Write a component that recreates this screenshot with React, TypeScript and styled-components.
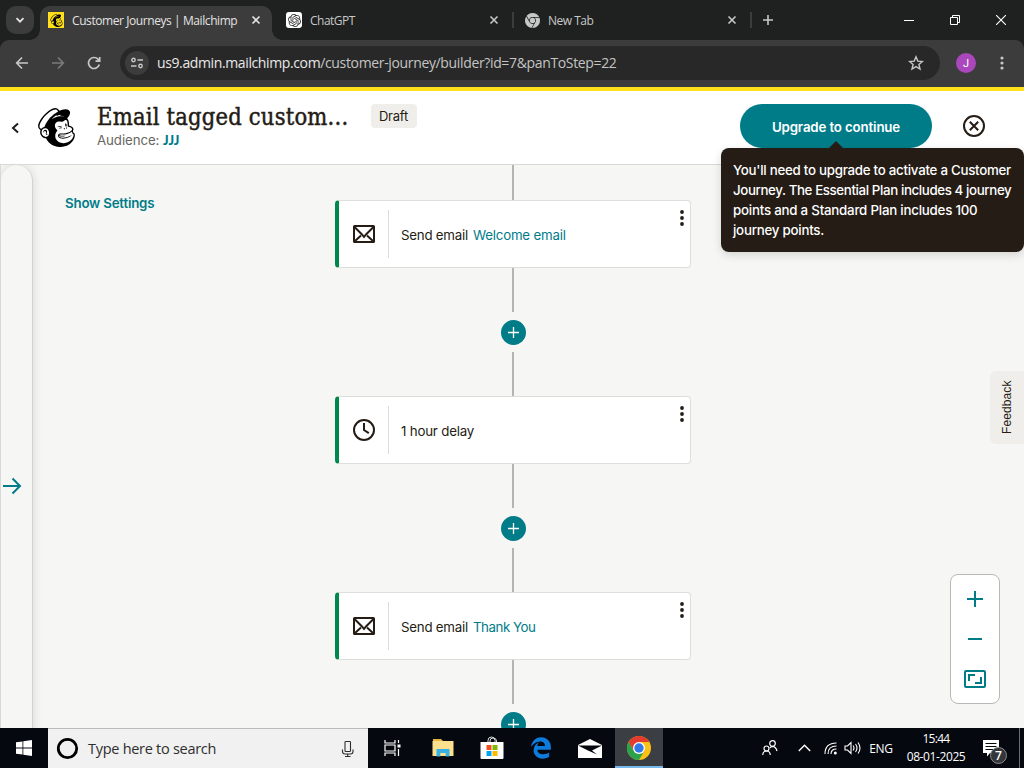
import React from "react";
import styled, { createGlobalStyle } from "styled-components";
import { SiMailchimp, SiOpenai, SiGooglechrome } from "react-icons/si";
import { FaEdgeLegacy } from "react-icons/fa6";

const TEAL = "#007c89";
const INK = "#241c15";
const SEGOE = '"Open Sans", "Noto Sans", sans-serif';
const GRAPHIK = 'Inter, "Liberation Sans", sans-serif';

const GlobalStyle = createGlobalStyle`
  * { box-sizing: border-box; }
  body { margin: 0; overflow: hidden; font-family: ${GRAPHIK}; color: ${INK}; }
  svg { display: block; flex: none; }
  button { border: 0; padding: 0; margin: 0; background: none; font: inherit; color: inherit; }
`;

const Screen = styled.div`
  width: 1024px;
  height: 768px;
  display: flex;
  flex-direction: column;
  overflow: hidden;
  background: #f6f6f4;
`;

/* Plain run of text; $ls tunes the tracking. */
const Label = styled.span<{ $size: number; $ls?: number; $weight?: number; $color?: string }>`
  font-size: ${(p) => p.$size}px;
  letter-spacing: ${(p) => p.$ls ?? 0}px;
  font-weight: ${(p) => p.$weight ?? 400};
  color: ${(p) => p.$color ?? "inherit"};
  white-space: pre;
`;

/* ---------- Browser chrome ---------- */
const TabStrip = styled.div`
  height: 40px;
  flex: none;
  display: flex;
  background: #1f2120;
  font-family: ${SEGOE};
  color: #c7c7c7;
`;

const TabSearch = styled.button`
  width: 28px;
  height: 28px;
  margin: 6px 6px 0;
  border-radius: 10px;
  background: #3c3c3c;
  display: grid;
  place-items: center;
`;

const Tab = styled.div<{ $active?: boolean; $width: number; $pad: number; $end?: number }>`
  position: relative;
  width: ${(p) => p.$width}px;
  height: 34px;
  margin-top: 6px;
  padding: 0 ${(p) => p.$end ?? 11}px 6px ${(p) => p.$pad}px;
  display: flex;
  align-items: center;
  gap: 8px;
  border-radius: 10px 10px 0 0;
  background: ${(p) => (p.$active ? "#3c3c3c" : "transparent")};
  color: ${(p) => (p.$active ? "#e3e3e3" : "#c7c7c7")};
  &::before,
  &::after {
    content: "";
    display: ${(p) => (p.$active ? "block" : "none")};
    position: absolute;
    bottom: 0;
    width: 10px;
    height: 10px;
  }
  &::before { left: -10px; background: radial-gradient(circle at 0 0, transparent 9.5px, #3c3c3c 10px); }
  &::after { right: -10px; background: radial-gradient(circle at 100% 0, transparent 9.5px, #3c3c3c 10px); }
  & > :last-child { margin-left: auto; }
`;

const Favicon = styled.div<{ $bg: string; $color: string }>`
  flex: none;
  width: 16px;
  height: 16px;
  border-radius: ${(p) => (p.$bg === "#fff" ? 3 : 0)}px;
  background: ${(p) => p.$bg};
  color: ${(p) => p.$color};
  display: grid;
  place-items: center;
`;

const TabDivider = styled.i`
  width: 2px;
  height: 16px;
  margin-top: 12px;
  background: #3c3c3c;
`;

const WindowControls = styled.div`
  margin-left: auto;
  display: flex;
  color: #fff;
  & > span { width: 46px; display: grid; place-items: center; }
`;

const NewTabButton = styled.button`
  width: 32px;
  display: grid;
  place-items: center;
`;

const ToolbarBack = styled.div`
  background: #1f2120;
  flex: none;
`;

const Toolbar = styled.div`
  height: 47px;
  padding: 0 15px 1px 15px;
  display: flex;
  align-items: center;
  border-radius: 9px 9px 0 0;
  background: #3c3c3c;
  color: #c7c7c7;
  font-family: ${SEGOE};
`;

const NavButtons = styled.div`
  width: 105px;
  display: flex;
  gap: 22px;
`;

const Omnibox = styled.div`
  width: 820px;
  height: 34px;
  padding: 0 16px 0 5px;
  border-radius: 17px;
  background: #282828;
  display: flex;
  align-items: center;
  gap: 8px;
  & > :last-child { margin-left: auto; }
`;

const Url = styled.div`
  padding-bottom: 2px;
`;

const SiteChip = styled.span`
  width: 24px;
  height: 24px;
  border-radius: 50%;
  background: #3c3c3c;
  display: grid;
  place-items: center;
`;

const Avatar = styled.span`
  width: 20px;
  height: 20px;
  margin: 0 23px 0 16px;
  border-radius: 50%;
  background: #ab47bc;
  color: #fff;
  font: 11px Roboto, sans-serif;
  display: grid;
  place-items: center;
`;

/* ---------- Page header ---------- */
const Header = styled.header`
  position: relative;
  z-index: 2;
  height: 78px;
  flex: none;
  display: flex;
  align-items: flex-start;
  border-top: 4px solid #ffe01b;
  border-bottom: 1px solid #d9d9d8;
  background: #fff;
`;

const HeaderBack = styled.div`
  width: 37px;
  padding: 31px 0 0 10px;
`;

const Brand = styled.div`
  width: 60px;
  padding-top: 17px;
  color: #000;
`;

const TitleBlock = styled.div`
  width: 274px;
  display: flex;
  flex-direction: column;
`;

const Title = styled.h1`
  margin: 11px 0 0;
  height: 29px;
  font: 400 23.5px/31px "DejaVu Serif Condensed", "DejaVu Serif", serif;
  letter-spacing: 0.2px;
  white-space: nowrap;
  -webkit-text-stroke: 0.45px ${INK};
`;

const Audience = styled.div`
  height: 16px;
  line-height: 16px;
  color: #6b6762;
`;

const AudienceLink = styled.a`
  font: 900 13px/16px Lato, sans-serif;
  color: ${TEAL};
`;

const Badge = styled.span`
  width: 46px;
  height: 24px;
  margin-top: 13px;
  padding-right: 1px;
  border-radius: 4px;
  background: #efeeea;
  display: grid;
  place-items: center;
`;

const Actions = styled.div`
  margin-left: auto;
  padding: 13px 39px 0 0;
  display: flex;
  align-items: center;
  gap: 31px;
`;

const UpgradeWrap = styled.div`
  position: relative;
`;

const UpgradeButton = styled.button`
  width: 192px;
  height: 44px;
  padding-bottom: 1px;
  border-radius: 22px;
  background: ${TEAL};
  color: #fff;
`;

const Tooltip = styled.div`
  position: absolute;
  top: 44px;
  left: -19px;
  width: 303px;
  height: 104px;
  padding: 12px;
  border-radius: 8px;
  background: ${INK};
  color: #fff;
  font-size: 13.3px;
  line-height: 20px;
  box-shadow: 0 3px 10px rgba(0, 0, 0, 0.14);
  display: flex;
  flex-direction: column;
  &::before {
    content: "";
    position: absolute;
    top: -7px;
    left: 108px;
    border: 7px solid transparent;
    border-top: 0;
    border-bottom-color: ${INK};
  }
`;

/* ---------- Journey canvas ---------- */
const Canvas = styled.main`
  height: 563px;
  flex: none;
  display: grid;
  grid-template-columns: 334px 356px 1fr;
  border-left: 1px solid #d9d9d8;
  overflow: hidden;
  background: #f6f6f4;
`;

const LeftSide = styled.div`
  display: flex;
`;

const Drawer = styled.aside`
  width: 32px;
  height: 580px;
  padding: 312px 0 0 2px;
  border-radius: 16px 16px 0 0;
  border-right: 1px solid #d3d3d1;
  background: #f6f6f4;
  box-shadow: 0 0 10px rgba(36, 28, 21, 0.14);
`;

const SettingsLink = styled.a`
  margin: 27px 0 0 32px;
  line-height: 20px;
  color: ${TEAL};
`;

const Flow = styled.div`
  display: flex;
  flex-direction: column;
  align-items: center;
`;

const Connector = styled.i<{ $height: number }>`
  flex: none;
  width: 2px;
  height: ${(p) => p.$height}px;
  background: #b4b4b2;
`;

const Card = styled.div`
  flex: none;
  width: 356px;
  height: 68px;
  display: flex;
  align-items: center;
  border: 1px solid #dddddb;
  border-left: 4px solid #00884a;
  border-radius: 4px;
  background: #fff;
`;

const CardIcon = styled.div`
  width: 50px;
  height: 48px;
  border-right: 1px solid #dddddb;
  display: grid;
  place-items: center;
`;

const CardText = styled.div`
  flex: 1;
  padding: 0 0 1px 12px;
`;

const StepLink = styled.a`
  margin-left: 5px;
  color: ${TEAL};
`;

const CardMenu = styled.div`
  align-self: flex-start;
  padding: 8px 5px 0 0;
`;

const AddStep = styled.button`
  flex: none;
  width: 25px;
  height: 25px;
  margin: 8px 0 7px;
  border-radius: 50%;
  background: ${TEAL};
  display: grid;
  place-items: center;
`;

const RightSide = styled.div`
  display: flex;
  flex-direction: column;
  align-items: flex-end;
`;

const Feedback = styled.button`
  width: 34px;
  height: 73px;
  margin-top: 206px;
  border-radius: 0 6px 6px 0;
  background: #efeeea;
  writing-mode: vertical-rl;
  transform: rotate(180deg);
  font-family: "Liberation Sans", sans-serif;
`;

const ZoomPanel = styled.div`
  width: 50px;
  height: 130px;
  margin: 130px 24px 0 0;
  padding: 15px 0;
  border: 1px solid #b9b8b5;
  border-radius: 8px;
  background: #fff;
  display: flex;
  flex-direction: column;
  align-items: center;
  gap: 30px;
`;

/* ---------- Windows taskbar ---------- */
const Taskbar = styled.footer`
  height: 40px;
  flex: none;
  display: flex;
  background: #05080f;
  color: #fff;
  font-family: ${SEGOE};
`;

const TaskCell = styled.div<{ $active?: boolean; $gap?: number }>`
  width: 48px;
  height: 40px;
  margin-right: ${(p) => p.$gap ?? 0}px;
  display: grid;
  place-items: center;
  background: ${(p) => (p.$active ? "#3b3e42" : "transparent")};
  box-shadow: ${(p) => (p.$active ? "inset 0 -2px #76b9ed" : "none")};
`;

const SearchBox = styled.div`
  width: 320px;
  padding: 0 13px 0 8px;
  display: flex;
  align-items: center;
  gap: 9px;
  border-top: 1px solid #bcbcbe;
  background: #f1f1f1;
  color: #2e2e2e;
  & > :last-child { margin-left: auto; }
`;

const Tray = styled.div`
  margin-left: auto;
  display: flex;
  align-items: center;
`;

const TrayItem = styled.div<{ $width: number }>`
  width: ${(p) => p.$width}px;
  display: flex;
  justify-content: center;
`;

const Clock = styled.div`
  width: 76px;
  display: flex;
  flex-direction: column;
  align-items: center;
  line-height: 18px;
`;

const Notifications = styled.div`
  position: relative;
  width: 45px;
  height: 40px;
  padding: 12px 0 0 9px;
`;

const Count = styled.span`
  position: absolute;
  left: 16px;
  top: 19px;
  width: 17px;
  height: 17px;
  border: 1px solid #8b8b8b;
  border-radius: 50%;
  background: #33363a;
  display: grid;
  place-items: center;
  line-height: 15px;
`;

const ShowDesktop = styled.i`
  width: 5px;
  height: 40px;
  border-left: 1px solid #6b6d70;
`;

/* ---------- Icons ---------- */
type IconProps = { w: number; h?: number; sw?: number; children: React.ReactNode };
const Icon = ({ w, h = w, sw = 1.5, children }: IconProps) => (
  <svg width={w} height={h} viewBox={`0 0 ${w} ${h}`} fill="none" stroke="currentColor" strokeWidth={sw}>
    {children}
  </svg>
);

const Cross = () => (
  <Icon w={10} sw={1.6}><path d="M1.5 1.5l7 7M8.5 1.5l-7 7" /></Icon>
);

const Arrow = ({ back }: { back?: boolean }) => (
  <Icon w={14} sw={1.7}>
    <path d={back ? "M13 7H2M7 1.5L1.7 7 7 12.5" : "M1 7h11M7 1.5L12.3 7 7 12.5"} opacity={back ? 1 : 0.45} />
  </Icon>
);

const Dots = ({ r, step, color }: { r: number; step: number; color: string }) => (
  <svg width={6} height={18} fill={color}>
    {[-1, 0, 1].map((i) => <circle key={i} cx={3} cy={9 + i * step} r={r} />)}
  </svg>
);

const MailIcon = () => (
  <svg width={24} height={24} fill="none" stroke={INK} strokeWidth={2}>
    <rect x="2" y="4" width="20" height="16" rx="0.5" />
    <path d="M2.5 5l7.500 7.500 2 2.500 2-2.500L21.500 5M2.5 19.500l6.500-6M21.500 19.500l-6.500-6" />
  </svg>
);

const ClockIcon = () => (
  <svg width={24} height={24} fill="none" stroke={INK} strokeWidth={2}>
    <circle cx="12" cy="12" r="10" />
    <path d="M12 5v7l4.800 3.200" />
  </svg>
);

type StepData = { kind: "mail" | "clock"; text: string; link?: string; ls: number; linkLs?: number };
const steps: StepData[] = [
  { kind: "mail", text: "Send email", link: "Welcome email", ls: -0.24, linkLs: -0.2 },
  { kind: "clock", text: "1 hour delay", ls: -0.2 },
  { kind: "mail", text: "Send email", link: "Thank You", ls: -0.24, linkLs: -0.45 },
];

const Step = ({ step }: { step: StepData }) => (
  <>
    <Card>
      <CardIcon>{step.kind === "mail" ? <MailIcon /> : <ClockIcon />}</CardIcon>
      <CardText>
        <Label $size={13.3} $ls={step.ls}>{step.text}</Label>
        {step.link && <StepLink><Label $size={13.3} $ls={step.linkLs}>{step.link}</Label></StepLink>}
      </CardText>
      <CardMenu><Dots r={1.9} step={6} color={INK} /></CardMenu>
    </Card>
    <Connector $height={44} />
    <AddStep><Icon w={13} sw={1.3}><g stroke="#fff"><path d="M6.500 1v11M1 6.500h11" /></g></Icon></AddStep>
  </>
);

export default function App() {
  return (
    <Screen>
      <GlobalStyle />
      <TabStrip>
        <TabSearch><Icon w={10} sw={1.8}><path d="M1.500 3.200L5 6.700l3.500-3.500" stroke="#e3e3e3" /></Icon></TabSearch>
        <Tab $active $width={232} $pad={8}>
          <Favicon $bg="#ffe01b" $color="#000"><SiMailchimp size={13} /></Favicon>
          <Label $size={12} $ls={-0.42}>Customer Journeys | Mailchimp</Label>
          <Cross />
        </Tab>
        <Tab $width={240} $pad={14} $end={13}>
          <Favicon $bg="#fff" $color="#333"><SiOpenai size={13} /></Favicon>
          <Label $size={12} $ls={-0.5}>ChatGPT</Label>
          <Cross />
        </Tab>
        <TabDivider />
        <Tab $width={236} $pad={11} $end={13}>
          <SiGooglechrome size={15} />
          <Label $size={12} $ls={-0.5}>New Tab</Label>
          <Cross />
        </Tab>
        <TabDivider />
        <NewTabButton><Icon w={12} sw={1.6}><path d="M6 1v10M1 6h10" /></Icon></NewTabButton>
        <WindowControls>
          <span><Icon w={10} sw={1}><path d="M0 5.500h10" /></Icon></span>
          <span><Icon w={10} sw={1}><path d="M.5 2.500h7v7h-7zM2.500 2.500v-2h7v7h-2" /></Icon></span>
          <span><Icon w={10} sw={1.1}><path d="M0 0l10 10M10 0L0 10" /></Icon></span>
        </WindowControls>
      </TabStrip>

      <ToolbarBack>
        <Toolbar>
          <NavButtons>
            <Arrow back />
            <Arrow />
            <Icon w={14} sw={1.7}><path d="M12.300 8.500A5.500 5.500 0 1 1 11 3.200l1.500 1.500M12.700 1v4.200H8.500" /></Icon>
          </NavButtons>
          <Omnibox>
            <SiteChip>
              <Icon w={12} sw={1.4}><circle cx="2.500" cy="3" r="1.700" /><path d="M6.500 3H12M0 9h5.500" /><circle cx="9.500" cy="9" r="1.700" /></Icon>
            </SiteChip>
            <Url>
              <Label $size={14} $ls={-0.38} $color="#e8e8e8">us9.admin.mailchimp.com</Label>
              <Label $size={14} $ls={-0.35} $color="#c4c4c4">/customer-journey/builder?id=7&amp;panToStep=22</Label>
            </Url>
            <Icon w={16} sw={1.4}><path d="M8 1.800l1.800 4.300 4.600.4-3.500 3 1.100 4.500-4-2.400-4 2.400 1.100-4.500-3.500-3 4.600-.4z" /></Icon>
          </Omnibox>
          <Avatar>J</Avatar>
          <Dots r={1.6} step={5} color="#c7c7c7" />
        </Toolbar>
      </ToolbarBack>

      <Header>
        <HeaderBack><Icon w={10} h={12} sw={2}><path d="M8 1.500L3 6l5 4.500" /></Icon></HeaderBack>
        <Brand><SiMailchimp size={39} /></Brand>
        <TitleBlock>
          <Title>Email tagged custom...</Title>
          <Audience>
            <Label $size={13.3} $ls={-0.1}>Audience: </Label>
            <AudienceLink>JJJ</AudienceLink>
          </Audience>
        </TitleBlock>
        <Badge><Label $size={13} $ls={-0.2}>Draft</Label></Badge>
        <Actions>
          <UpgradeWrap>
            <UpgradeButton><Label $size={13.3} $ls={-0.15} $weight={600}>Upgrade to continue</Label></UpgradeButton>
            <Tooltip role="tooltip">
              <Label $size={13.3} $ls={-0.26} $weight={500}>You'll need to upgrade to activate a Customer</Label>
              <Label $size={13.3} $ls={-0.38} $weight={500}>Journey. The Essential Plan includes 4 journey</Label>
              <Label $size={13.3} $ls={-0.22} $weight={500}>points and a Standard Plan includes 100</Label>
              <Label $size={13.3} $ls={-0.24} $weight={500}>journey points.</Label>
            </Tooltip>
          </UpgradeWrap>
          <Icon w={22} sw={2}><circle cx="11" cy="11" r="10" /><path d="M6.800 6.800l8.400 8.400M15.200 6.800l-8.400 8.400" /></Icon>
        </Actions>
      </Header>

      <Canvas>
        <LeftSide>
          <Drawer>
            <Icon w={19} h={18} sw={2}><g stroke={TEAL}><path d="M0 9h17M9.500 1.500L17 9l-7.500 7.500" /></g></Icon>
          </Drawer>
          <SettingsLink><Label $size={13.3} $ls={-0.2} $weight={600}>Show Settings</Label></SettingsLink>
        </LeftSide>
        <Flow>
          <Connector $height={35} />
          <Step step={steps[0]} />
          <Connector $height={44} />
          <Step step={steps[1]} />
          <Connector $height={44} />
          <Step step={steps[2]} />
        </Flow>
        <RightSide>
          <Feedback><Label $size={12} $ls={0.1}>Feedback</Label></Feedback>
          <ZoomPanel>
            <Icon w={18} sw={2}><g stroke={TEAL}><path d="M9 1v16M1 9h16" /></g></Icon>
            <Icon w={14} h={2} sw={2}><g stroke={TEAL}><path d="M0 1h14" /></g></Icon>
            <Icon w={22} h={18} sw={2}>
              <g stroke={TEAL}>
                <rect x="1" y="1" width="20" height="16" rx="1" />
                <path d="M5 11V5h6M17 7v6h-6" />
              </g>
            </Icon>
          </ZoomPanel>
        </RightSide>
      </Canvas>

      <Taskbar>
        <TaskCell>
          <svg width={16} height={16} fill="#fff"><path d="M0 2.300l6.500-.9v6.200H0zM7.300 1.300L16 0v7.600H7.300zM0 8.400h6.500v6.200L0 13.700zM7.300 8.400H16V16l-8.700-1.200z" /></svg>
        </TaskCell>
        <SearchBox>
          <Icon w={23} sw={2.8}><circle cx="11.500" cy="11.500" r="9.200" stroke="#000" /></Icon>
          <Label $size={14.5} $ls={-0.28}>Type here to search</Label>
          <Icon w={15} h={18} sw={1.1}><rect x="5" y="1.500" width="5.500" height="10" rx="0.800" /><path d="M2.500 9.500v2q0 2.500 2.500 2.500h5.500q2.500 0 2.500-2.500v-2M7.700 14v2.500M5 16.500h5.500" /></Icon>
        </SearchBox>
        <TaskCell $gap={3}>
          <Icon w={17} h={16} sw={1.2}>
            <path d="M1 0v3h10V0M1 5h10v6H1zM1 16v-3h10v3M14.500 0v3M14.500 9v7" />
            <rect x="13.500" y="4.500" width="3" height="3" fill="#fff" strokeWidth={0} />
          </Icon>
        </TaskCell>
        <TaskCell $gap={1}>
          <svg width={22} height={20}>
            <path d="M1 1h8l2 2h9.500v5H1z" fill="#e8b63c" />
            <path d="M.5 3h21v15H.500z" fill="#fde08d" />
            <path d="M4.500 18.500V11h13v7.500h-3.800V15H8.300v3.500z" fill="#38b0e4" />
          </svg>
        </TaskCell>
        <TaskCell $gap={1}>
          <svg width={24} height={24}>
            <path d="M8 7V4.500Q8 1 11.500 1T15 4.500V7M10 7V5q0-3 3-3 3.500 0 3.500 3v2" fill="none" stroke="#ddd" />
            <path d="M.5 6h23v16q0 1-1 1h-21q-1 0-1-1z" fill="#fff" />
            <path d="M6.500 9h5v5h-5z" fill="#f25022" />
            <path d="M12.500 9h5v5h-5z" fill="#7fba00" />
            <path d="M6.500 15h5v5h-5z" fill="#00a4ef" />
            <path d="M12.500 15h5v5h-5z" fill="#ffb900" />
          </svg>
        </TaskCell>
        <TaskCell $gap={1}><FaEdgeLegacy size={22} color="#0d7bdc" /></TaskCell>
        <TaskCell $gap={1}>
          <svg width={24} height={19}>
            <path d="M0 6L12 0l12 6v13H0z" fill="#fff" />
            <path d="M0 6.500h24L14 11.500l5 4-9-4z" fill="#05080f" />
          </svg>
        </TaskCell>
        <TaskCell $active>
          <svg width={24} height={24} viewBox="0 0 24 24">
            <circle cx="12" cy="12" r="12" fill="#fbc116" />
            <path d="M1.600 6A12 12 0 0 1 22.400 6H12L6.800 15z" fill="#e33b2e" />
            <path d="M1.600 6A12 12 0 0 0 12 24l5.200-9-5.200 3-5.200-3z" fill="#2ba24c" />
            <circle cx="12" cy="12" r="6" fill="#fff" />
            <circle cx="12" cy="12" r="4.700" fill="#3278e8" />
          </svg>
        </TaskCell>
        <Tray>
          <TrayItem $width={41}>
            <Icon w={16} h={16} sw={1.2}><circle cx="10.500" cy="3.500" r="2.800" /><circle cx="4.500" cy="8.500" r="2.500" /><path d="M.7 15q.3-4 3.800-4t3.800 4M8 8q1-1.700 2.500-1.700Q14 6.500 15 11" /></Icon>
          </TrayItem>
          <TrayItem $width={29}><Icon w={13} h={8} sw={1.4}><path d="M.8 7l5.700-5.700L12.200 7" /></Icon></TrayItem>
          <TrayItem $width={22}>
            <Icon w={13} h={14} sw={1.1}><path d="M1 13Q1 2 12.500 2M4 13Q4 5 12.500 5M7 13q0-5 5.500-5" /><circle cx="11.300" cy="12" r="1.500" fill="#fff" stroke="none" /></Icon>
          </TrayItem>
          <TrayItem $width={23}>
            <Icon w={17} h={14} sw={1.1}><path d="M1 5h2.500L7 1.500v11L3.500 9H1zM9 4.500q2 2.500 0 5M11.500 3q3 4 0 8M14 1.500q4 5.500 0 11" /></Icon>
          </TrayItem>
          <TrayItem $width={34}><Label $size={12} $ls={-0.3}>ENG</Label></TrayItem>
          <Clock>
            <Label $size={12} $ls={-0.7}>15:44</Label>
            <Label $size={12} $ls={-0.4}>08-01-2025</Label>
          </Clock>
          <Notifications>
            <svg width={16} height={17}><path d="M0 0h16v13H7l-3 3.500V13H0z" fill="#fff" /><path d="M2.500 3.500h11M2.500 6.500h11M2.500 9.500h8" stroke="#05080f" /></svg>
            <Count><Label $size={12} $weight={600}>7</Label></Count>
          </Notifications>
          <ShowDesktop />
        </Tray>
      </Taskbar>
    </Screen>
  );
}
